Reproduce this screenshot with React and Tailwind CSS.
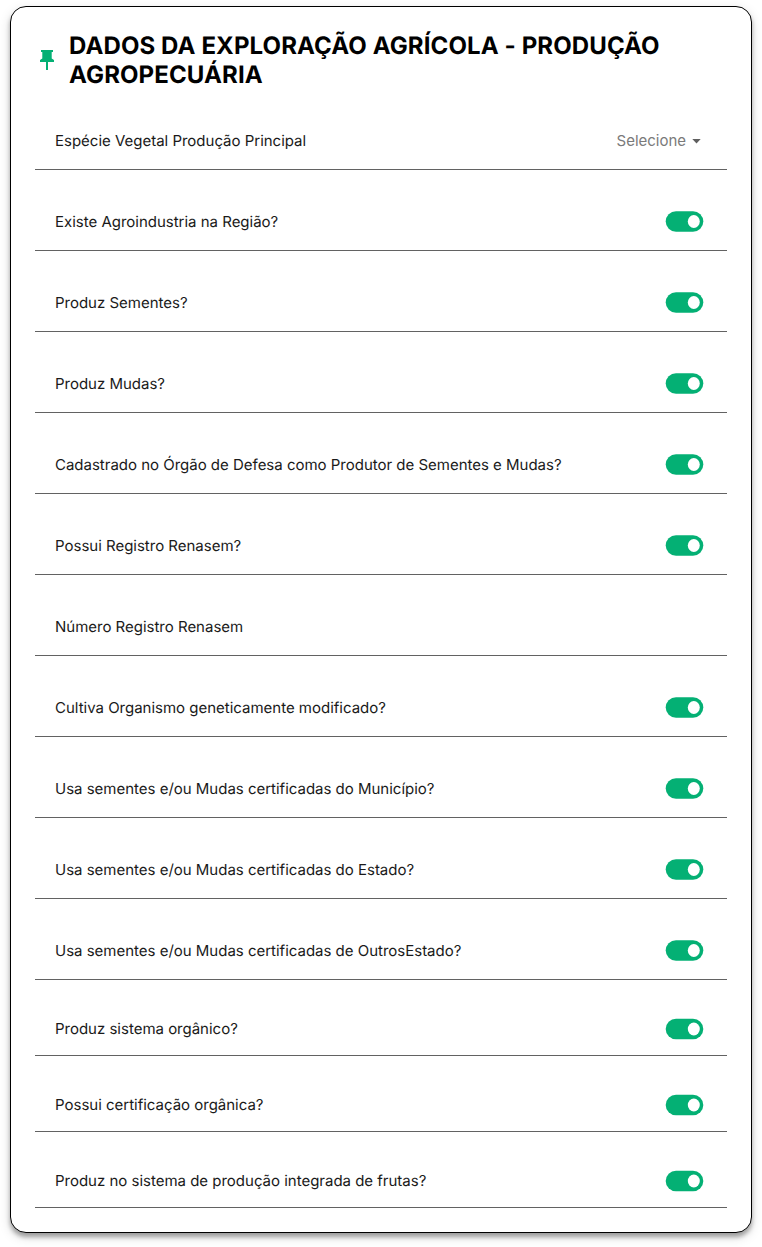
const campos = [
  { label: 'Espécie Vegetal Produção Principal', tipo: 'select' },
  { label: 'Existe Agroindustria na Região?', tipo: 'toggle' },
  { label: 'Produz Sementes?', tipo: 'toggle' },
  { label: 'Produz Mudas?', tipo: 'toggle' },
  { label: 'Cadastrado no Órgão de Defesa como Produtor de Sementes e Mudas?', tipo: 'toggle' },
  { label: 'Possui Registro Renasem?', tipo: 'toggle' },
  { label: 'Número Registro Renasem', tipo: 'texto' },
  { label: 'Cultiva Organismo geneticamente modificado?', tipo: 'toggle' },
  { label: 'Usa sementes e/ou Mudas certificadas do Município?', tipo: 'toggle' },
  { label: 'Usa sementes e/ou Mudas certificadas do Estado?', tipo: 'toggle' },
  { label: 'Usa sementes e/ou Mudas certificadas de OutrosEstado?', tipo: 'toggle' },
  { label: 'Produz sistema orgânico?', tipo: 'toggle', compacto: true },
  { label: 'Possui certificação orgânica?', tipo: 'toggle', compacto: true },
  { label: 'Produz no sistema de produção integrada de frutas?', tipo: 'toggle', compacto: true },
];

function PinIcon() {
  return (
    <svg width="14" height="20" viewBox="0 0 14 20" fill="#04b074" className="shrink-0">
      <path d="M1 0h12v2h-1.3v6.6L14 10v2H8v8H6v-8H0v-2l2.3-1.4V2H1z" />
    </svg>
  );
}

function Toggle({ compacto }) {
  return (
    <button type="button" role="switch" aria-checked="true" className="mr-6 block">
      <svg
        width="38"
        height="21"
        viewBox={compacto ? '0 -0.5 38 21' : '0 0 38 21'}
        className="overflow-visible"
      >
        <rect x="0.7" y="0.2" width="37.6" height="20.6" rx="10.3" fill="#04b074" />
        <ellipse cx="28.8" cy="10.5" rx="6" ry="6.5" fill="#fff" />
      </svg>
    </button>
  );
}

function Seletor() {
  return (
    <button type="button" className="mr-[26px] flex items-center gap-1.5 text-[#7a7a7a]">
      <span>Selecione</span>
      <svg width="9" height="5" viewBox="0 0 9 5" fill="#5f5f5f">
        <path d="M0.3 0h8.4L4.5 4.4z" />
      </svg>
    </button>
  );
}

function Linha({ label, tipo, compacto }) {
  return (
    <div
      className={`flex items-end justify-between border-b border-[#626262] text-[15px] leading-5 tracking-[-0.01px] text-[#1a1a1a] ${
        compacto ? 'h-[76px] pb-4' : 'h-[81px] pb-[18px]'
      }`}
    >
      <span className="ml-5">{label}</span>
      {tipo === 'toggle' && <Toggle compacto={compacto} />}
      {tipo === 'select' && <Seletor />}
    </div>
  );
}

export default function App() {
  return (
    <div className="h-[1247px] bg-white px-2.5 pt-1.5 font-['Inter',sans-serif] text-black [text-rendering:geometricPrecision]">
      <section className="h-[1227px] w-[742px] rounded-2xl border border-black bg-white px-6 shadow-[0_4px_4px_rgba(0,0,0,0.3),0_4px_12px_rgba(0,0,0,0.15)]">
        <header className="flex h-[82px] items-center gap-[15px] pt-6 pl-[5px]">
          <PinIcon />
          <h1 className="text-2xl leading-[29px] font-bold tracking-[0.11px]">
            DADOS DA EXPLORAÇÃO AGRÍCOLA - PRODUÇÃO AGROPECUÁRIA
          </h1>
        </header>
        {campos.map((campo) => (
          <Linha key={campo.label} {...campo} />
        ))}
      </section>
    </div>
  );
}
